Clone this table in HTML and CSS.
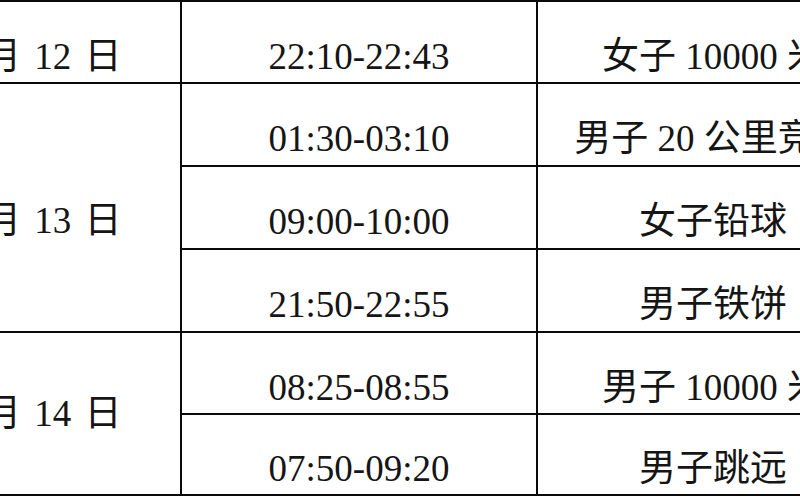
FILE: index.html
```html
<!DOCTYPE html>
<html lang="zh-CN">
<head>
<meta charset="utf-8">
<title>赛程表</title>
<link rel="stylesheet" href="styles.css">
</head>
<body>
<div class="sheet">
  <div class="cell date date-a">8 月 12 日</div>
  <div class="cell">22:10-22:43</div>
  <div class="cell">女子 10000 米</div>

  <div class="cell date date-b">8 月 13 日</div>
  <div class="cell">01:30-03:10</div>
  <div class="cell">男子 20 公里竞走</div>
  <div class="cell">09:00-10:00</div>
  <div class="cell">女子铅球</div>
  <div class="cell">21:50-22:55</div>
  <div class="cell">男子铁饼</div>

  <div class="cell date date-c">8 月 14 日</div>
  <div class="cell">08:25-08:55</div>
  <div class="cell">男子 10000 米</div>
  <div class="cell">07:50-09:20</div>
  <div class="cell">男子跳远</div>
</div>
</body>
</html>
```
FILE: styles.css
```css
html, body {
  margin: 0;
  padding: 0;
  background: #ffffff;
  overflow: hidden;
}

.sheet {
  display: grid;
  grid-template-columns: 286px 354px 350px;
  grid-template-rows: 80px 81px 81px 81px 80px 79px;
  gap: 2px;
  padding: 2px;
  background: #0a0a0a;
  width: max-content;
  margin-left: -108px;
  font-family: "Liberation Serif", "Noto Sans CJK SC", serif;
  font-size: 37px;
  line-height: 40px;
  color: #151515;
}

.cell {
  background: #ffffff;
  display: flex;
  align-items: center;
  justify-content: center;
  padding-top: 29px;
  white-space: nowrap;
}

.date {
  word-spacing: 4px;
}

.date-a {
  grid-row: span 1;
}

.date-b {
  grid-row: span 3;
  padding-top: 26px;
}

.date-c {
  grid-row: span 2;
  padding-top: 0;
}
```
